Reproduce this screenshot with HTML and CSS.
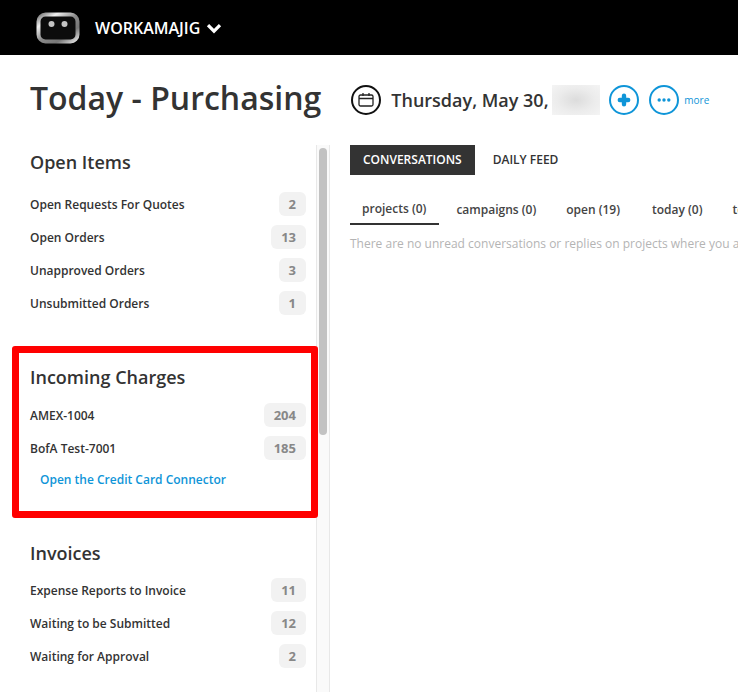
FILE: index.html
```html
<!DOCTYPE html>
<html lang="en">
<head>
<meta charset="utf-8">
<title>Today - Purchasing</title>
<link rel="stylesheet" href="styles.css">
</head>
<body>
<header class="topbar">
  <svg class="logo" width="44" height="32" viewBox="0 0 44 32">
    <defs>
      <linearGradient id="metal" x1="0" y1="0" x2="1" y2="1">
        <stop offset="0" stop-color="#777"/>
        <stop offset=".22" stop-color="#f0f0f0"/>
        <stop offset=".5" stop-color="#8a8a8a"/>
        <stop offset=".75" stop-color="#777"/>
        <stop offset="1" stop-color="#e4e4e4"/>
      </linearGradient>
    </defs>
    <rect x="2.5" y="2.5" width="39" height="27" rx="7" fill="#0c0c0c" stroke="url(#metal)" stroke-width="4"/>
    <circle cx="15.5" cy="12" r="3" fill="#c4c4c4"/>
    <circle cx="28.5" cy="12" r="3" fill="#c4c4c4"/>
  </svg>
  <span class="brand">WORKAMAJIG</span>
  <svg class="chev" width="16" height="11" viewBox="0 0 16 11"><path d="M2 2.2l6 6 6-6" fill="none" stroke="#fff" stroke-width="3.2"/></svg>
</header>

<div class="titlebar">
  <h1 class="title">Today - Purchasing</h1>
  <div class="datebar">
    <span class="circle cal">
      <svg width="16" height="16" viewBox="0 0 16 16" fill="none" stroke="#222" stroke-width="1.3"><rect x="1" y="3" width="14" height="11" rx="1.5"/><path d="M1 6.5h14M5 1v3M11 1v3"/></svg>
    </span>
    <span class="date">Thursday, May 30,</span>
    <span class="blur"></span>
    <span class="circle act">
      <svg width="16" height="16" viewBox="0 0 16 16"><path d="M8 3.8v8.4M3.8 8h8.4" stroke="#0f95d8" stroke-width="4.4" stroke-linecap="round"/></svg>
    </span>
    <span class="circle act dots">
      <svg width="16" height="6" viewBox="0 0 16 6" fill="#0f95d8"><circle cx="3.2" cy="3" r="1.7"/><circle cx="8" cy="3" r="1.7"/><circle cx="12.8" cy="3" r="1.7"/></svg>
    </span>
    <a class="more">more</a>
  </div>
</div>

<div class="content">
  <aside class="sidebar">
    <section class="group">
      <h2>Open Items</h2>
      <div class="row"><span>Open Requests For Quotes</span><b class="badge">2</b></div>
      <div class="row"><span>Open Orders</span><b class="badge">13</b></div>
      <div class="row"><span>Unapproved Orders</span><b class="badge">3</b></div>
      <div class="row"><span>Unsubmitted Orders</span><b class="badge">1</b></div>
    </section>
    <section class="group charges">
      <h2>Incoming Charges</h2>
      <div class="row"><span>AMEX-1004</span><b class="badge">204</b></div>
      <div class="row"><span>BofA Test-7001</span><b class="badge">185</b></div>
      <a class="connector">Open the Credit Card Connector</a>
      <div class="redbox"></div>
    </section>
    <section class="group invoices">
      <h2>Invoices</h2>
      <div class="row"><span>Expense Reports to Invoice</span><b class="badge">11</b></div>
      <div class="row"><span>Waiting to be Submitted</span><b class="badge">12</b></div>
      <div class="row"><span>Waiting for Approval</span><b class="badge">2</b></div>
    </section>
  </aside>
  <div class="scrolltrack"><div class="thumb"></div></div>
  <main class="main">
    <div class="switch">
      <span class="sw on">CONVERSATIONS</span>
      <span class="sw">DAILY FEED</span>
    </div>
    <nav class="tabs">
      <span class="tab active">projects (0)</span>
      <span class="tab">campaigns (0)</span>
      <span class="tab wide">open (19)</span>
      <span class="tab">today (0)</span>
      <span class="tab">tomorrow (0)</span>
    </nav>
    <p class="empty">There are no unread conversations or replies on projects where you are a participant.</p>
  </main>
</div>
</body>
</html>
```
FILE: styles.css
```css
* { box-sizing: border-box; }
html, body { margin: 0; height: 100%; overflow: hidden; }
body { font-family: "Open Sans", "Liberation Sans", sans-serif; color: #333; background: #fff; }

.topbar { height: 55px; background: #000; display: flex; align-items: center; padding-left: 36px; }
.logo { display: block; margin-right: 15px; }
.brand { color: #fff; font-size: 16px; font-weight: 600; }
.chev { margin-left: 6px; margin-top: 1px; }

.titlebar { height: 90px; display: flex; align-items: center; padding: 0 0 0 30px; white-space: nowrap; }
.title { margin: 0 0 6px; font-size: 32px; font-weight: 600; color: #333; }
.datebar { display: flex; align-items: center; margin-left: 30px; }
.circle { width: 30px; height: 30px; border-radius: 50%; display: flex; align-items: center; justify-content: center; flex: none; }
.cal { border: 2px solid #111; }
.act { border: 2px solid #0f95d8; }
.date { font-size: 18px; font-weight: 600; margin-left: 10px; width: 158px; }
.blur { width: 48px; height: 30px; margin: 0 9px 0 3px; background: radial-gradient(ellipse at center, #dcdcdc 0, #ececec 55%, #f4f4f4 100%); }
.dots { margin-left: 10px; }
.more { color: #0f95d8; font-size: 10px; margin-left: 5px; }

.content { display: flex; height: 547px; }
.sidebar { width: 316px; flex: none; padding: 0 10px 0 30px; }
.group { padding-top: 5px; }
.group h2 { margin: 0 0 18px; font-size: 18px; font-weight: 600; line-height: 24px; color: #333; }
.row { display: flex; justify-content: space-between; align-items: center; height: 24px; margin-bottom: 9px; font-size: 12px; font-weight: 600; color: #333; }
.badge { min-width: 27px; height: 24px; padding: 0 10px; background: #f2f2f2; border-radius: 6px; color: #888; font-size: 13px; font-weight: 700; display: flex; align-items: center; justify-content: center; }
.charges { position: relative; margin-top: 45px; }
.charges h2 { margin-bottom: 14px; }
.connector { display: block; padding-top: 1px; margin-left: 10px; color: #0f95d8; font-size: 12px; font-weight: 600; line-height: 20px; }
.redbox { position: absolute; left: -18px; right: -12px; top: -14px; bottom: -28px; border: 7px solid #f00; border-radius: 3px; }
.invoices { margin-top: 46px; }
.invoices h2 { margin-bottom: 13px; }

.scrolltrack { width: 14px; flex: none; background: #fafafa; border-left: 1px solid #e8e8e8; border-right: 1px solid #e8e8e8; padding: 3px 2px 0; }
.thumb { width: 8px; height: 287px; background: #c2c2c2; border-radius: 4px; }

.main { flex: 1; min-width: 0; padding-left: 20px; overflow: hidden; white-space: nowrap; }
.switch { display: flex; height: 30px; }
.sw { display: flex; align-items: center; padding: 0 13px 2px; font-size: 12px; font-weight: 600; color: #333; margin-right: 5px; }
.sw.on { background: #333; color: #fff; }
.tabs { display: flex; margin-top: 25px; height: 25px; }
.tab { padding: 0 13px 0 12px; margin-right: 5px; font-size: 12px; font-weight: 600; color: #444; line-height: 18px; padding-top: 1px; }
.tab.wide { margin-right: 7px; }
.tab.active { border-bottom: 2px solid #333; padding-top: 0; }
.empty { margin: 10px 0 0; font-size: 12px; color: #b4b4b4; font-weight: 400; }
```
